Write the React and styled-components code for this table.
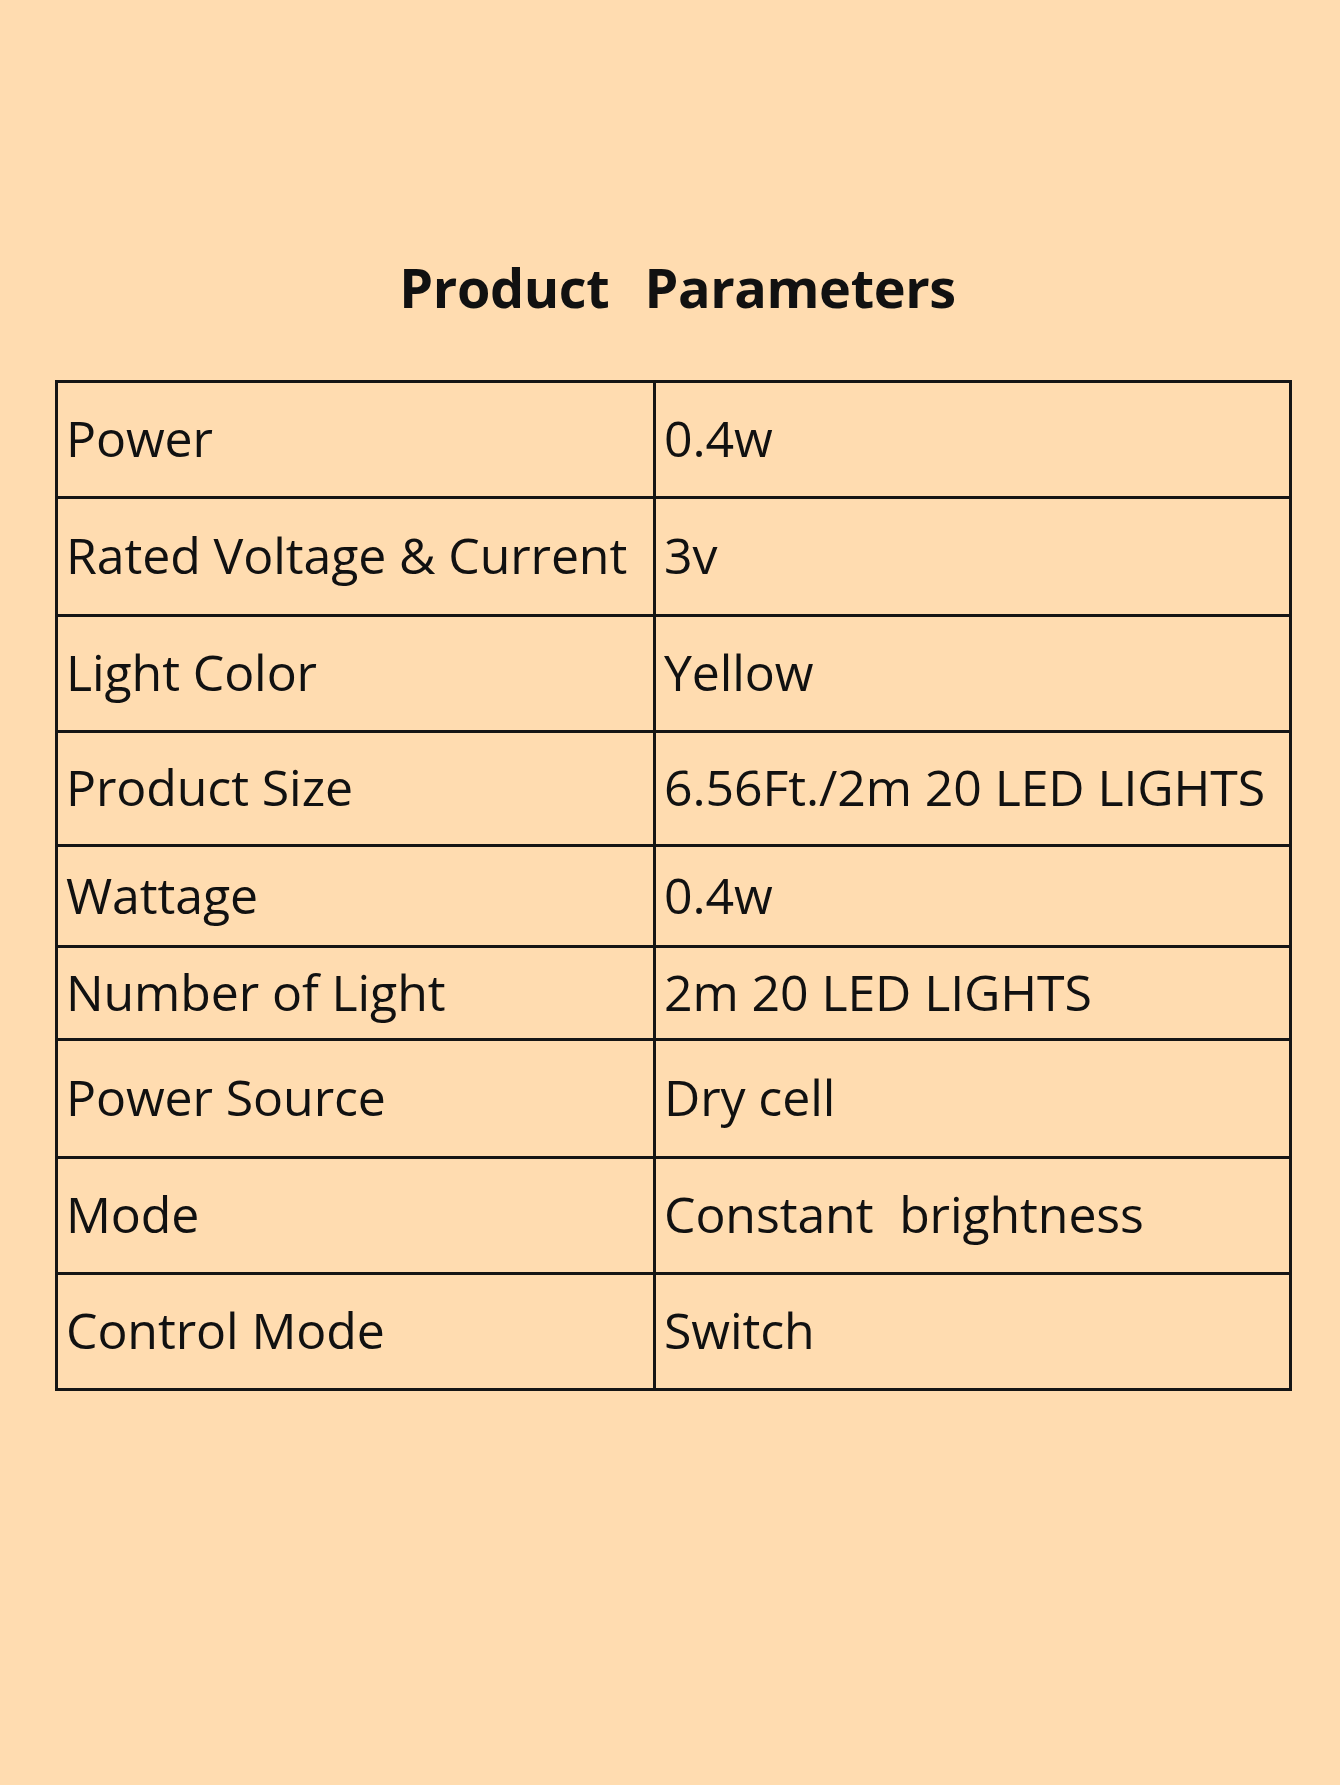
import React from 'react';
import styled, { createGlobalStyle } from 'styled-components';

const GlobalStyle = createGlobalStyle`
  html, body {
    margin: 0;
    padding: 0;
    background: #ffdcb0;
  }
`;

const Page = styled.div`
  width: 1340px;
  height: 1785px;
  background: #ffdcb0;
  font-family: "Open Sans", "Noto Sans", sans-serif;
  color: #111;
  display: flex;
  flex-direction: column;
  padding: 255px 48px 0 55px;
  box-sizing: border-box;
`;

const Title = styled.h1`
  margin: 0;
  padding-left: 8px;
  text-align: center;
  font-size: 54px;
  font-weight: 700;
  line-height: 64px;
  white-space: pre;
  word-spacing: 4px;
  letter-spacing: -0.4px;
`;

const Table = styled.div`
  margin-top: 61px;
  width: 1237px;
  display: grid;
  grid-template-columns: 598px 1fr;
  border-top: 3px solid #151515;
  border-left: 3px solid #151515;
  box-sizing: border-box;
`;

const Cell = styled.div`
  height: ${props => props.h}px;
  box-sizing: border-box;
  border-right: 3px solid #151515;
  border-bottom: 3px solid #151515;
  display: flex;
  align-items: center;
  padding-left: 8px;
  padding-bottom: 3px;
  font-size: 50px;
  letter-spacing: -0.1px;
  white-space: nowrap;
`;

const rows = [
  ['Power', '0.4w', 116],
  ['Rated Voltage & Current', '3v', 118],
  ['Light Color', 'Yellow', 116],
  ['Product Size', '6.56Ft./2m 20 LED LIGHTS', 114],
  ['Wattage', '0.4w', 101],
  ['Number of Light', '2m 20 LED LIGHTS', 93],
  ['Power Source', 'Dry cell', 118],
  ['Mode', 'Constant\u00a0 brightness', 116],
  ['Control Mode', 'Switch', 116],
];

export default function App() {
  return (
    <Page>
      <GlobalStyle />
      <Title>{'Product  Parameters'}</Title>
      <Table>
        {rows.map(([label, value, h]) => (
          <React.Fragment key={label}>
            <Cell h={h}>{label}</Cell>
            <Cell h={h}>{value}</Cell>
          </React.Fragment>
        ))}
      </Table>
    </Page>
  );
}
